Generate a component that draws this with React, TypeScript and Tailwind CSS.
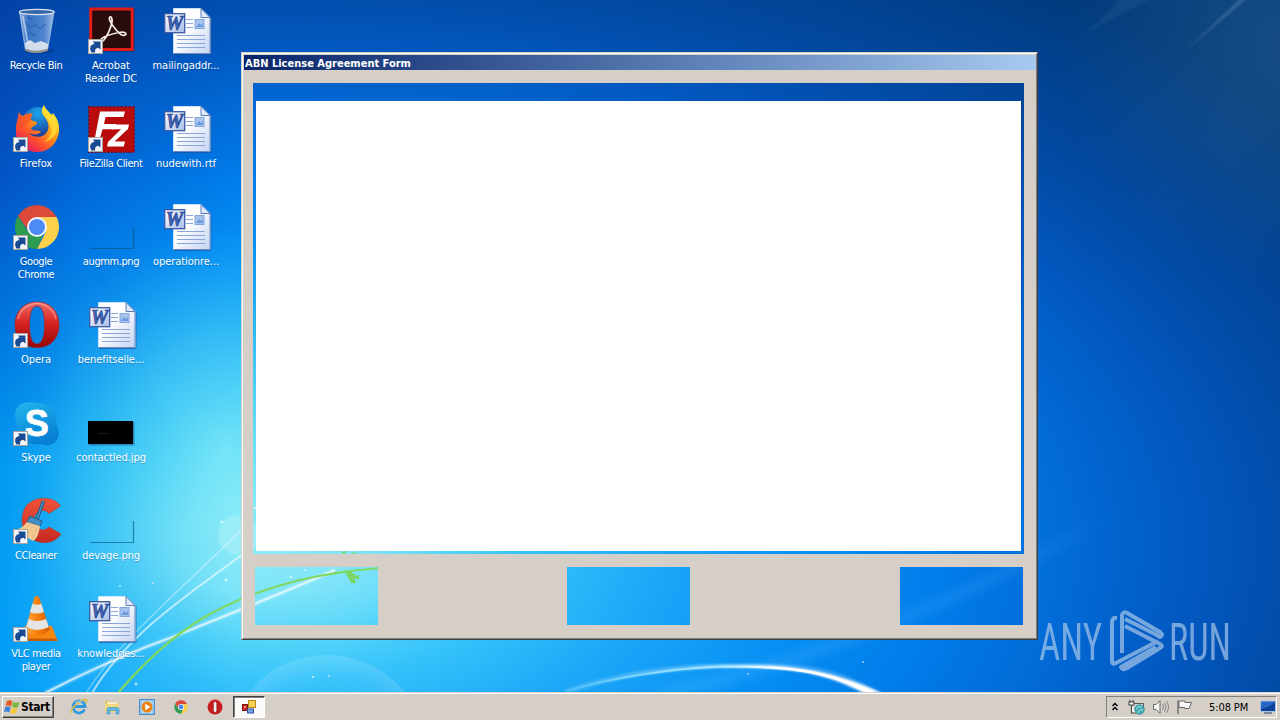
import React from "react";

const UI = "font-['DejaVu_Sans_Condensed','DejaVu_Sans',Tahoma,sans-serif] [font-stretch:condensed]";

function Wallpaper() {
  return (
    <svg className="absolute inset-0" width="1280" height="720" viewBox="0 0 1280 720">
      <defs>
        <radialGradient id="sky" gradientUnits="userSpaceOnUse" cx="0" cy="0" r="1" gradientTransform="translate(265 545) scale(1300 700)">
          <stop offset="0" stopColor="#a4f0fa" />
          <stop offset=".07" stopColor="#8ce8fa" />
          <stop offset=".14" stopColor="#54d4fa" />
          <stop offset=".2" stopColor="#36c2fa" />
          <stop offset=".3" stopColor="#1ea8f8" />
          <stop offset=".42" stopColor="#068ff4" />
          <stop offset=".53" stopColor="#017be8" />
          <stop offset=".62" stopColor="#026ad6" />
          <stop offset=".72" stopColor="#0257be" />
          <stop offset=".82" stopColor="#0249a2" />
          <stop offset="1" stopColor="#003a7c" />
        </radialGradient>
        <linearGradient id="edgeColor" x1="0" y1="0" x2="0" y2="1">
          <stop offset="0" stopColor="#0342a6" />
          <stop offset=".25" stopColor="#0352c4" />
          <stop offset=".45" stopColor="#0074dc" />
          <stop offset=".65" stopColor="#0098f0" />
          <stop offset="1" stopColor="#009cf8" />
        </linearGradient>
        <linearGradient id="edgeFade" x1="0" y1="0" x2="1" y2="0">
          <stop offset="0" stopColor="#fff" stopOpacity=".95" />
          <stop offset=".35" stopColor="#fff" stopOpacity=".45" />
          <stop offset="1" stopColor="#fff" stopOpacity="0" />
        </linearGradient>
        <mask id="edgeMask"><rect width="230" height="720" fill="url(#edgeFade)" /></mask>
        <radialGradient id="glow" gradientUnits="userSpaceOnUse" cx="0" cy="0" r="1" gradientTransform="translate(225 450) scale(190 230)">
          <stop offset="0" stopColor="#8cf0f6" stopOpacity=".6" />
          <stop offset=".5" stopColor="#5fe2f4" stopOpacity=".35" />
          <stop offset="1" stopColor="#28c0f0" stopOpacity="0" />
        </radialGradient>
        <radialGradient id="corner" gradientUnits="userSpaceOnUse" cx="1290" cy="50" r="230">
          <stop offset="0" stopColor="#3a6a90" stopOpacity=".4" />
          <stop offset="1" stopColor="#3a6a90" stopOpacity="0" />
        </radialGradient>
        <radialGradient id="bubble" cx=".5" cy=".5" r=".5">
          <stop offset="0" stopColor="#fff" stopOpacity="0" />
          <stop offset=".8" stopColor="#fff" stopOpacity=".03" />
          <stop offset="1" stopColor="#fff" stopOpacity=".13" />
        </radialGradient>
        <linearGradient id="arc" gradientUnits="userSpaceOnUse" x1="560" y1="0" x2="880" y2="0">
          <stop offset="0" stopColor="#7fdcff" stopOpacity=".6" />
          <stop offset=".5" stopColor="#aeeaff" />
          <stop offset=".7" stopColor="#fff" />
        </linearGradient>
        <linearGradient id="beam" gradientUnits="userSpaceOnUse" x1="660" y1="0" x2="1110" y2="0">
          <stop offset="0" stopColor="#5cc0ff" />
          <stop offset=".8" stopColor="#43a5ff" stopOpacity=".8" />
          <stop offset="1" stopColor="#43a5ff" stopOpacity="0" />
        </linearGradient>
        <filter id="soft"><feGaussianBlur stdDeviation="1.2" /></filter>
        <filter id="softer" x="-20%" y="-50%" width="140%" height="200%"><feGaussianBlur stdDeviation="5" /></filter>
      </defs>
      <rect width="1280" height="720" fill="url(#sky)" />
      <rect width="230" height="720" fill="url(#edgeColor)" mask="url(#edgeMask)" />
      <rect y="200" width="430" height="520" fill="url(#glow)" />
      <rect x="1040" width="240" height="300" fill="url(#corner)" />
      <path d="M1184 52 L1250 -4 L1243 -4Z" fill="#6f95b8" opacity=".35" filter="url(#soft)" />
      <path d="M1085 34 L1160 -6 L1125 -6Z" fill="#4077ab" opacity=".16" filter="url(#soft)" />
      <path d="M660 695 Q900 640 1110 515" fill="none" stroke="url(#beam)" strokeWidth="13" opacity=".24" filter="url(#softer)" />
      <circle cx="327" cy="755" r="100" fill="url(#bubble)" />
      <circle cx="238" cy="535" r="20" fill="#fff" opacity=".18" filter="url(#soft)" />
      <g fill="none" stroke="#fff">
        <path d="M45 693 C105 662 150 645 175 636 C235 612 290 590 335 570" strokeWidth="4" opacity=".3" filter="url(#soft)" />
        <path d="M45 693 C105 662 150 645 175 636 C235 612 290 590 335 570" strokeWidth="2.2" opacity=".6" />
        <path d="M92 693 C130 630 195 590 254 546" strokeWidth="2" opacity=".6" />
        <path d="M86 693 C120 640 170 600 254 518" strokeWidth="1.3" opacity=".4" />
      </g>
      <path d="M118 693 C175 626 225 599 300 580 Q340 571 380 568" fill="none" stroke="#80d860" strokeWidth="2.2" />
      <path d="M344 570 L352 572 L356 583 L351 583 Z M352 573 l5 3 l2 -2 v6 l-5 -2Z M341 552 l6-1 l-3 3Z M350 554 l7-2 l-3 3Z" fill="#78d866" />
      <path d="M565 692 C640 667 700 666 720 666 C790 664 835 667 874 692" fill="none" stroke="#b9e6ff" strokeWidth="5" opacity=".25" filter="url(#soft)" />
      <path d="M563 692 C620 674 690 665 730 665 C800 664 835 672 882 693 L864 693 C820 671 790 668 730 667.5 C690 667 620 676 563 692Z" fill="url(#arc)" filter="url(#soft)" />
      <path d="M563 692 C620 674 690 666 730 666 C800 665 832 672 876 693 L868 693 C826 672 790 668 730 667.5 C690 667 620 676 563 692Z" fill="url(#arc)" />
      <g fill="#fff" opacity=".6">
        <circle cx="226" cy="580" r="1.6" /><circle cx="222" cy="522" r="1.5" /><circle cx="153" cy="583" r="1" /><circle cx="120" cy="586" r="1" />
        <circle cx="136" cy="684" r="1.5" /><circle cx="313" cy="677" r="1.2" /><circle cx="329" cy="676" r="1" /><circle cx="291" cy="577" r="1.2" />
        <circle cx="305" cy="570" r="1" /><circle cx="748" cy="674" r="1" /><circle cx="863" cy="662" r="1" /><circle cx="255" cy="508" r="1.2" />
      </g>
    </svg>
  );
}

function Shortcut() {
  return (
    <g>
      <rect x="1.5" y="32.5" width="14" height="14" fill="#f2f6fa" stroke="#a8a49c" />
      <path d="M4.500 45.500 C1.500 40.500 4 37.500 7.500 37 L6 34.500 L13.500 34.500 L13.500 42.500 L11.200 40.800 C8.800 41 7.600 42.500 8.200 45.500Z" fill="#1a4a92" />
    </g>
  );
}

function Icon({ children }: { children?: React.ReactNode }) {
  return <svg className="shrink-0 overflow-visible" width="48" height="48" viewBox="0 0 48 48">{children}</svg>;
}

function WordFile() {
  return (
    <Icon>
      <defs>
        <linearGradient id="paper" x1="0" y1="0" x2="1" y2="1"><stop offset=".4" stopColor="#fff" /><stop offset="1" stopColor="#c3d3f2" /></linearGradient>
        <linearGradient id="wbox" x1="0" y1="0" x2="1" y2="1"><stop offset="0" stopColor="#fff" /><stop offset="1" stopColor="#a9bce6" /></linearGradient>
      </defs>
      <path d="M12 47.5H49V11" fill="none" stroke="#1c4f8c" opacity=".6" />
      <path d="M11.5 1.5H39L48 10.5V46.5H11.5Z" fill="url(#paper)" stroke="#dde8fa" strokeWidth=".8" />
      <path d="M48 10.5V46.5H11.5" fill="none" stroke="#6d8bc4" />
      <path d="M39 1.5V10.5H48Z" fill="#dfe9fb" stroke="#4a6fae" strokeWidth=".9" />
      <path d="M24 12.500h7M24 16.500h7M24 20.500h7M15 28.500h28M15 32.500h28M15 36.500h28M15 40.500h28" stroke="#8ba6da" strokeWidth="1.2" />
      <rect x="33" y="12.500" width="9" height="9" fill="#a7c3ee" stroke="#86a5dc" />
      <path d="M34 20l3-4 2 2 2-2v4z" fill="#6c9be0" />
      <rect x="2.700" y="6.700" width="20" height="19" fill="url(#wbox)" stroke="#3a59a6" strokeWidth="1.300" />
      <text x="12.500" y="22.800" textAnchor="middle" fontSize="20" fontWeight="700" fontStyle="italic" textLength="17.500" lengthAdjust="spacingAndGlyphs" fill="#4168b8" stroke="#213e8c" strokeWidth=".7" className="font-['Liberation_Serif',serif]">W</text>
    </Icon>
  );
}

function RecycleBin() {
  return (
    <Icon>
      <defs>
        <linearGradient id="glass" x1="0" y1="0" x2="1" y2="0"><stop offset="0" stopColor="#bcd4f0" stopOpacity=".85" /><stop offset=".25" stopColor="#4f86d0" stopOpacity=".7" /><stop offset=".7" stopColor="#6f9edc" stopOpacity=".7" /><stop offset="1" stopColor="#c8daf0" stopOpacity=".8" /></linearGradient>
      </defs>
      <ellipse cx="27" cy="44" rx="15" ry="3" fill="#022c66" opacity=".35" />
      <path d="M7.500 5L13.500 43Q24 48 35.500 43L42 5Z" fill="url(#glass)" stroke="#aac6e8" strokeWidth=".8" />
      <path d="M13 36L18 33L23 36L29 34L36 37L35.500 43Q24 47 13.500 43Z" fill="#eceef0" opacity=".85" />
      <path d="M13.300 41.500Q24 46 35.800 41.500L35.500 44Q24 48 13.500 44Z" fill="#8f8f8c" />
      <ellipse cx="24.700" cy="5" rx="17.500" ry="2.700" fill="#3566a8" stroke="#d9e3ee" strokeWidth="1.200" />
      <path d="M12 14l6 6 6-2 4 4 6-5M17 25l6 4M15 10l6 3" fill="none" stroke="#285ca8" strokeWidth="1.600" opacity=".55" />
      <path d="M11 9L16 37" stroke="#fff" strokeWidth="1.500" opacity=".5" />
    </Icon>
  );
}

function Acrobat() {
  return (
    <Icon>
      <rect x="3" y="1" width="45" height="44" fill="#062a66" opacity=".5" />
      <rect x="3.700" y="2" width="41.500" height="40.500" fill="#2a0b0c" stroke="#e21d18" strokeWidth="3" />
      <path d="M14 34.500C11 32 21 27 35.500 25C42 26 38 30 34 27.500C27 22 21.500 13 22.500 10.500C24 8 26.500 12 24 19C21.500 27 16.500 35.500 14 34.500Z" fill="none" stroke="#f7efee" strokeWidth="1.700" />
      <Shortcut />
    </Icon>
  );
}

function Firefox() {
  return (
    <Icon>
      <defs>
        <linearGradient id="ffFlame" x1=".85" y1="0" x2=".15" y2=".9"><stop offset=".15" stopColor="#ffe32e" /><stop offset=".45" stopColor="#ff9a16" /><stop offset=".72" stopColor="#ff502d" /><stop offset="1" stopColor="#e51a63" /></linearGradient>
        <radialGradient id="ffGlobe" cx=".5" cy=".2" r=".8"><stop offset="0" stopColor="#19a6ee" /><stop offset="1" stopColor="#21328f" /></radialGradient>
      </defs>
      <circle cx="26" cy="18" r="16" fill="url(#ffGlobe)" />
      <path d="M7 7C8 10 10 11 11 11C14 8 19 8 21 9C19 11 19 13 19 15C22 17 25 16 25 18C24 21 20 21 19 24C22 27 26 24 29 27C26 30 21 30 17 28C22 34 33 33 36 25C38 18 34 14 31 10C29 6 30 3 32 0C34 5 37 7 40 10L41 8C46 14 49 23 46 31C43 41 35 47 25 47C12 47 3 38 4 25C4 18 6 15 7 7Z" fill="url(#ffFlame)" />
      <path d="M7 7C8 10 10 11 11 11C14 8 19 8 21 9C19 11 19 13 19 15L12 22L4 25C4 18 6 15 7 7Z" fill="#f4502c" opacity=".75" />
      <path d="M32 0C29 6 35 13 38 18C42 27 37 35 31 37C40 36 46 29 45 20C44 10 34 9 32 0Z" fill="#ffdf38" opacity=".75" />
      <Shortcut />
    </Icon>
  );
}

function FileZilla() {
  return (
    <Icon>
      <rect x="1.800" y="1.800" width="45.500" height="45.500" fill="#b90b0c" stroke="#780c18" strokeWidth="1.500" strokeDasharray="2 2" />
      <path d="M13 6.500H38L36.500 12H18.500L17 19H29L27.700 24.300H15.500L11 40H6.500Z" fill="#fff" />
      <path d="M26 19.500H42L41 24L27.500 36.500H38L36.800 41.500H20L21 37L34 24.300H25Z" fill="#fff" />
      <Shortcut />
    </Icon>
  );
}

function ChromeMark() {
  return (
    <g>
      <path d="M25 14H44.600A22 22 0 0 1 25 46L33.700 29Z" fill="#fcd04b" />
      <path d="M5.950 13L16.300 29L25 34L31 32L25 46A22 22 0 0 1 5.950 13Z" fill="#2d9c50" />
      <path d="M5.950 13A22 22 0 0 1 44.600 14H25L16 27Z" fill="#dc4a3c" />
      <circle cx="25" cy="24" r="10" fill="#f5f6f8" />
      <circle cx="25" cy="24" r="8" fill="#4c8bf5" />
    </g>
  );
}

function OperaMark() {
  return (
    <g>
      <defs><linearGradient id="operaRed" x1="0" y1="0" x2="0" y2="1"><stop offset="0" stopColor="#ee7068" /><stop offset=".45" stopColor="#d82420" /><stop offset="1" stopColor="#950606" /></linearGradient></defs>
      <path fillRule="evenodd" d="M25 1C39 1 47 11 47 24S39 46.500 25 46.500S3 37 3 24S11 1 25 1ZM25 5C20 5 17.500 12 17.500 24S20 43 25 43S32.500 36 32.500 24S30 5 25 5Z" fill="url(#operaRed)" stroke="#a91b1b" strokeWidth=".6" />
      <path d="M6 18C8 8 16 3 25 2.200C35 3 42 9 44 18" stroke="#ffb1a8" fill="none" strokeWidth="1.500" opacity=".6" />
    </g>
  );
}

function Skype() {
  return (
    <Icon>
      <defs><linearGradient id="skypeBlue" x1="0" y1="0" x2=".4" y2="1"><stop offset="0" stopColor="#22b8ee" /><stop offset="1" stopColor="#087fd4" /></linearGradient></defs>
      <path d="M15 3.500C19 2 22 4 24 4C37 3 45 12 44.500 24C44.500 26 48 31 46.500 37C44 46 36 48 29 45C15 47 4 39 5 25C5 22 2 18 3.500 12C5 7 9 4 15 3.500Z" fill="url(#skypeBlue)" />
      <text x="24.700" y="37" textAnchor="middle" fontSize="36" fontWeight="700" fill="#fff" stroke="#fff" strokeWidth=".8" className="font-['Liberation_Sans',sans-serif]">S</text>
      <Shortcut />
    </Icon>
  );
}

function CCleaner() {
  return (
    <Icon>
      <defs><linearGradient id="ccRed" x1="0" y1="0" x2="0" y2="1"><stop offset="0" stopColor="#f0523a" /><stop offset="1" stopColor="#c62a20" /></linearGradient></defs>
      <path d="M48.500 9L37 16.500C33 11 23 13 22 22C21 32 31 36 37 30L49 37C43 46 31 48 22 43C10 38 7 22 13 11C21-2 42-1 48.500 9Z" fill="url(#ccRed)" stroke="#b23528" strokeWidth=".5" />
      <path d="M31.500 4L25 22" stroke="#245a88" strokeWidth="3.600" />
      <path d="M31.500 4L25 22" stroke="#4b94c6" strokeWidth="1.500" />
      <path d="M18 19L30 24L28 29L15 25Z" fill="#438dc0" stroke="#245b88" />
      <path d="M15 25L28 29C27 36 25 42 21 44C16 41 9 36 3 33C8 32 12 29 15 25Z" fill="#f3cb92" />
      <path d="M17 28L10 34M21 29L15 38M25 31L20 42" stroke="#e2b478" strokeWidth=".8" />
      <Shortcut />
    </Icon>
  );
}

function Vlc() {
  return (
    <Icon>
      <defs><linearGradient id="vlcO" x1="0" y1="0" x2="1" y2="0"><stop offset="0" stopColor="#ffad42" /><stop offset=".55" stopColor="#f67a05" /><stop offset="1" stopColor="#d65d00" /></linearGradient></defs>
      <path d="M13 31H40L45.500 46H10Z" fill="#f68610" />
      <path d="M10 43.500H45L45.500 46H10Z" fill="#c95d04" />
      <path d="M22.500 2Q25 0 27 2L37.500 34Q35 40 25 40T13.500 34Z" fill="url(#vlcO)" />
      <path d="M20.500 8.500Q25 11 29.300 8.500L32 17Q25 20 17.900 17Z" fill="#e4e4e5" />
      <path d="M16.700 24Q25 28 34.100 24L36.800 32Q25 38 14.200 32Z" fill="#e4e4e5" />
      <Shortcut />
    </Icon>
  );
}

function ImageOutline() {
  return <Icon><path d="M3 45.500H46.500V24" fill="none" stroke="#075583" strokeWidth="1.200" opacity=".65" /></Icon>;
}

type Item = { icon: React.ReactNode; lines: string[]; tight?: boolean };

function DesktopColumn({ items, width }: { items: Item[]; width: string }) {
  return (
    <div className={`flex flex-col ${width}`}>
      {items.map((it) => (
        <div key={it.lines[0]} className="flex h-[98px] flex-col items-center gap-1">
          {it.icon}
          <div className={`whitespace-nowrap text-center text-[11px] leading-[13px] text-white [text-shadow:0_1px_1px_rgba(0,40,90,0.3)] ${it.tight ? "tracking-[-0.4px]" : "tracking-[-0.05px]"}`}>
            {it.lines.map((l) => <div key={l}>{l}</div>)}
          </div>
        </div>
      ))}
    </div>
  );
}

const colA: Item[] = [
  { icon: <RecycleBin />, lines: ["Recycle Bin"], tight: true },
  { icon: <Firefox />, lines: ["Firefox"] },
  { icon: <Icon><ChromeMark /><Shortcut /></Icon>, lines: ["Google", "Chrome"], tight: true },
  { icon: <Icon><OperaMark /><Shortcut /></Icon>, lines: ["Opera"] },
  { icon: <Skype />, lines: ["Skype"] },
  { icon: <CCleaner />, lines: ["CCleaner"], tight: true },
  { icon: <Vlc />, lines: ["VLC media", "player"], tight: true },
];
const colB: Item[] = [
  { icon: <Acrobat />, lines: ["Acrobat", "Reader DC"] },
  { icon: <FileZilla />, lines: ["FileZilla Client"], tight: true },
  { icon: <ImageOutline />, lines: ["augmm.png"], tight: true },
  { icon: <WordFile />, lines: ["benefitselle..."] },
  { icon: <Icon><rect x="2" y="23" width="45.500" height="23.500" fill="#075583" opacity=".5" /><rect x="1" y="22" width="45" height="23" fill="#000" /><path d="M11 34.500h11" stroke="#241024" /></Icon>, lines: ["contactled.jpg"] },
  { icon: <ImageOutline />, lines: ["devage.png"] },
  { icon: <WordFile />, lines: ["knowledges..."] },
];
const colC: Item[] = [
  { icon: <WordFile />, lines: ["mailingaddr..."] },
  { icon: <WordFile />, lines: ["nudewith.rtf"] },
  { icon: <WordFile />, lines: ["operationre..."] },
];

const face = "bg-[#d5cfc8]";

/* The form's picture box and buttons are see-through, so the face is laid out around them. */
function FormWindow() {
  return (
    <div className="absolute left-[241px] top-[52px] flex h-[588px] w-[797px] border-b border-l border-r border-t border-b-[#404040] border-l-[#d5cfc8] border-r-[#404040] border-t-[#d5cfc8]">
      <div className="flex flex-1 flex-col border border-b-[#808080] border-l-white border-r-[#808080] border-t-white">
        <div className={`h-[16px] pl-px pt-px ${face}`}>
          <div className="flex h-[15px] items-center bg-linear-to-r from-[#0a246a] to-[#a6caf0] pl-[1px]">
            <span className="whitespace-nowrap pt-px text-[11px] font-bold leading-[15px] text-white">ABN License Agreement Form</span>
          </div>
        </div>
        <div className={`h-[13px] ${face}`} />
        <div className="flex h-[471px]">
          <div className={`w-[10px] ${face}`} />
          <div className="flex-1 px-[3px] pb-[3px] pt-[18px]"><div className="h-full bg-white" /></div>
          <div className={`w-[12px] ${face}`} />
        </div>
        <div className={`h-[13px] ${face}`} />
        <div className="flex h-[58px]">
          <div className={`w-[12px] ${face}`} />
          <div className="w-[123px]" />
          <div className={`w-[189px] ${face}`} />
          <div className="w-[123px]" />
          <div className={`w-[210px] ${face}`} />
          <div className="w-[123px]" />
          <div className={`flex-1 ${face}`} />
        </div>
        <div className={`flex-1 ${face}`} />
      </div>
    </div>
  );
}

function Watermark() {
  return (
    <svg className="absolute left-[1036px] top-[600px]" width="220" height="82" viewBox="1036 600 220 82" opacity=".66">
      <g fill="#b3cdec" className="font-[Roboto,sans-serif]" fontSize="52.500">
        <text x="1039" y="659.500" textLength="63" lengthAdjust="spacingAndGlyphs">ANY</text>
        <text x="1169" y="659.500" textLength="62" lengthAdjust="spacingAndGlyphs">RUN</text>
      </g>
      <g fill="none" stroke="#b3cdec" strokeWidth="4" strokeLinejoin="round">
        <path d="M1117 618Q1112 617 1112 623V661Q1112 665 1116 663L1158 641" />
        <path d="M1122 653V615Q1123 611 1127 613L1160 632Q1164 635 1160 637L1155 634L1125 619" />
        <path d="M1125 626L1160 644Q1164 646 1160 648L1127 668Q1123 671 1121 667L1156 647" />
      </g>
    </svg>
  );
}

function Mini({ children }: { children: React.ReactNode }) {
  return <div className="flex h-[22px] w-[34px] items-center justify-center pr-[1px]">{children}</div>;
}

function Taskbar() {
  return (
    <div className="absolute bottom-0 left-0 flex h-[28px] w-full items-start border-t border-[#d5cfc8] bg-[#d5cfc8] text-[11px]">
      <div className="flex h-[27px] w-full border-t border-white pt-[2px]">
        <div className="ml-[2px] flex h-[22px] w-[52px] items-center gap-[1px] border border-b-[#404040] border-l-white border-r-[#404040] border-t-white pl-[1px] shadow-[inset_-1px_-1px_0_#808080]">
          <svg width="16" height="16" viewBox="0 0 16 16">
            <path d="M3 2Q6 .5 8.500 2.500L7 7.500Q4.500 6 1.500 7Z" fill="#e65b25" />
            <path d="M9.300 3Q12 4.500 15.500 3L14 8Q11 9.500 8 8Z" fill="#78b83c" />
            <path d="M1.200 8Q4 7 6.700 8.500L5.200 13.500Q2.500 12 0 13Z" fill="#3d7fd4" />
            <path d="M7.600 9Q10.500 10.500 13.600 9L12 14Q9 15.500 6.100 14Z" fill="#f7c637" />
          </svg>
          <span className="text-[12px] font-bold leading-[14px] tracking-[-0.4px]">Start</span>
        </div>
        <div className="ml-[8px] mr-[1px] flex">
          <Mini>
            <svg width="18" height="18" viewBox="0 0 18 18"><path d="M14.500 11.500A6 6 0 1 1 15 8.500H5" fill="none" stroke="#3399df" strokeWidth="2.800" /><path d="M2 15C-1 12 9 1 16 1.500Q18 2 15.500 5" fill="none" stroke="#e2bd42" strokeWidth="1.500" /><path d="M5 5Q8 2 12 4" stroke="#9bd6fa" fill="none" /></svg>
          </Mini>
          <Mini>
            <svg width="17" height="16" viewBox="0 0 17 16"><path d="M1 2H6L7 4H14V9H1Z" fill="#e5c45e" /><path d="M3 3H13V8H3Z" fill="#f6edc4" /><path d="M1 5H15V13H1Z" fill="#f4d982" /><path d="M3 15V10Q3 8.500 5 8.500H13Q15 8.500 15 10V15H12V11.500H6V15Z" fill="#63b8e2" stroke="#3c91c0" strokeWidth=".6" /></svg>
          </Mini>
          <Mini>
            <svg width="16" height="16" viewBox="0 0 16 16"><rect x=".5" y=".5" width="15" height="15" fill="#8cc2ed" stroke="#4c8ccb" /><rect x="2.500" y="2" width="11" height="12" fill="#b7daf3" /><circle cx="8" cy="8" r="5.500" fill="#f08010" /><path d="M6.200 4.700L11.500 8L6.200 11.300Z" fill="#fff" /></svg>
          </Mini>
          <Mini><svg width="14" height="14" viewBox="2 1 46 46"><ChromeMark /></svg></Mini>
          <Mini><svg width="16" height="16" viewBox="0 0 16 16"><circle cx="8" cy="8" r="7.500" fill="#c71c20" /><path d="M1.500 5A7 7 0 0 1 14.500 5" stroke="#ed7570" fill="none" /><rect x="6.300" y="2.500" width="3.600" height="11" rx="1.800" fill="#eee" stroke="#8b0d10" strokeWidth=".7" /></svg></Mini>
        </div>
        <div className="flex h-[22px] w-[32px] items-center justify-center border border-b-white border-l-[#404040] border-r-white border-t-[#404040] bg-[#fbfaf9] shadow-[inset_1px_1px_0_#808080]">
          <svg width="16" height="16" viewBox="0 0 16 16"><rect x="1.500" y="5.500" width="5" height="6" fill="#c02a22" stroke="#7c1712" /><rect x="3" y="7" width="2" height="2" fill="#ff9283" /><rect x="7.500" y="1.500" width="7" height="7" fill="#f8d153" stroke="#b98b22" /><rect x="6.500" y="10" width="6" height="4" fill="#7ba4ec" stroke="#2d54a4" /></svg>
        </div>
        <div className="ml-auto mr-[3px] flex h-[22px] w-[171px] items-center border border-b-white border-l-[#808080] border-r-white border-t-[#808080]">
          <svg className="ml-[4px]" width="8" height="10" viewBox="0 0 8 10" fill="none" stroke="#000" strokeWidth="1.400"><path d="M1.500 4L4 1.500L6.500 4M1.500 8L4 5.500L6.500 8" /></svg>
          <svg className="ml-[9px]" width="18" height="16" viewBox="0 0 18 16"><path d="M5 4.500H15.500V11H7" fill="#ddd" stroke="#555" /><path d="M2 1V3M5 1V3M1 3H6V6H1ZM3.500 6V14H8" fill="#fff" stroke="#444" strokeWidth="1.100" /><circle cx="11.500" cy="10.500" r="4.800" fill="#43a9b2" stroke="#33848e" strokeWidth=".7" /><path d="M8 10Q11 6 14 8M10 14Q10 10 15 11" stroke="#a9e7de" fill="none" /></svg>
          <svg className="ml-[6px]" width="18" height="16" viewBox="0 0 18 16" fill="none" stroke="#666"><path d="M1.500 5.500H4L8 1.500V14.500L4 10.500H1.500Z" fill="#f5f5f5" /><path d="M10.500 5Q12.500 8 10.500 11M12.500 3.500Q15.500 8 12.500 12.500M14.500 2Q18.500 8 14.500 14" stroke="#888" /></svg>
          <svg className="ml-[6px]" width="17" height="16" viewBox="0 0 17 16"><path d="M2 1.500V15" stroke="#777" strokeWidth="1.600" /><path d="M3 2H9V3.500H15.500L13 9.500H8.500V8.500H3Z" fill="#f8f8f8" stroke="#666" /></svg>
          <span className="ml-[16px] w-[40px] whitespace-nowrap leading-[13px] tracking-[-0.1px]">5:08 PM</span>
          <svg className="ml-[11px]" width="16" height="16" viewBox="0 0 16 16"><rect x=".5" y="2" width="15" height="10.500" fill="#2668c4" stroke="#b8cdec" strokeWidth=".8" /><path d="M1 10Q9 9 15 3V12H1Z" fill="#0f4196" /><path d="M4 14H12" stroke="#5b6e91" strokeWidth="1.500" /></svg>
        </div>
      </div>
    </div>
  );
}

export default function App() {
  return (
    <div className={`relative h-[720px] w-[1280px] overflow-hidden bg-[#0068d0] text-black ${UI}`}>
      <Wallpaper />
      <div className="relative flex pt-[7px]">
        <DesktopColumn items={colA} width="w-[72px]" />
        <DesktopColumn items={colB} width="w-[78px]" />
        <DesktopColumn items={colC} width="w-[72px]" />
      </div>
      <FormWindow />
      <Watermark />
      <Taskbar />
    </div>
  );
}
